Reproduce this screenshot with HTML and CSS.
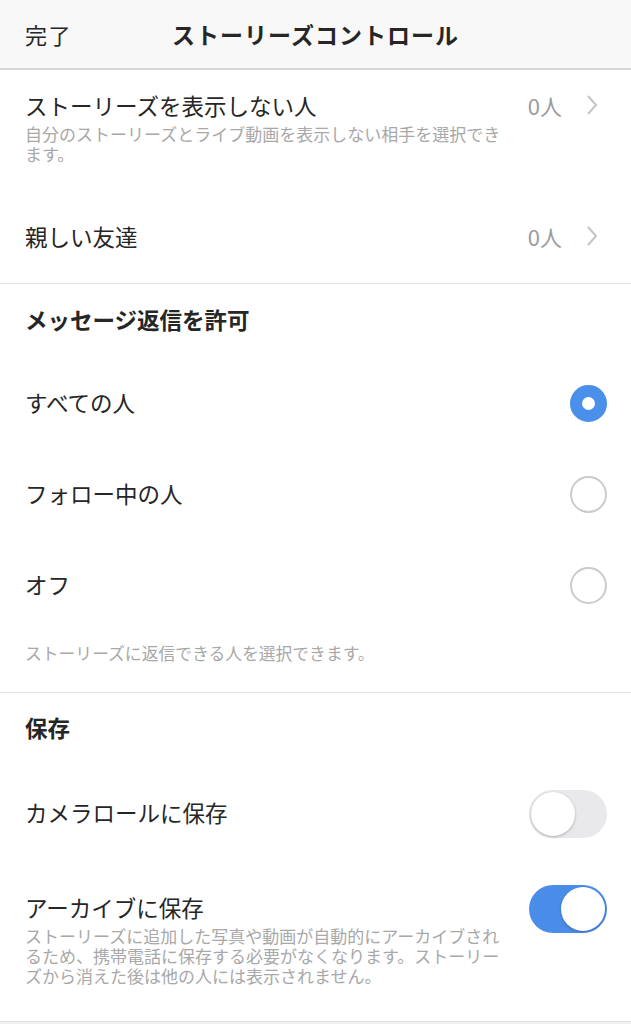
FILE: index.html
```html
<!DOCTYPE html>
<html lang="ja">
<head>
    <meta charset="utf-8">
    <title>ストーリーズコントロール</title>
    <link rel="stylesheet" href="styles.css">
</head>
<body>
    <div class="nav">
        <span class="nav-done">完了</span>
        <span class="nav-title">ストーリーズコントロール</span>
        <span></span>
    </div>

    <div class="page">
        <!-- who can see -->
        <section class="group">
            <div class="row row-detail">
                <div class="row-text">
                    <div class="row-label">ストーリーズを表示しない人</div>
                    <div class="row-note">自分のストーリーズとライブ動画を表示しない相手を選択できます。</div>
                </div>
                <div class="row-value">0人
                    <svg class="chevron" width="12" height="22" viewBox="0 0 12 22"><path d="M2 2 L10 11 L2 20" /></svg>
                </div>
            </div>
            <div class="row row-plain">
                <div class="row-label">親しい友達</div>
                <div class="row-value">0人
                    <svg class="chevron" width="12" height="22" viewBox="0 0 12 22"><path d="M2 2 L10 11 L2 20" /></svg>
                </div>
            </div>
        </section>

        <!-- replies -->
        <section class="group">
            <div class="group-title"><span>メッセージ返信を許可</span></div>
            <div class="row row-plain">
                <div class="row-label">すべての人</div>
                <span class="radio radio-on"></span>
            </div>
            <div class="row row-plain">
                <div class="row-label">フォロー中の人</div>
                <span class="radio"></span>
            </div>
            <div class="row row-plain">
                <div class="row-label">オフ</div>
                <span class="radio"></span>
            </div>
            <div class="group-note">ストーリーズに返信できる人を選択できます。</div>
        </section>

        <!-- saving -->
        <section class="group">
            <div class="group-title group-title-short"><span>保存</span></div>
            <div class="row row-plain row-tall">
                <div class="row-label">カメラロールに保存</div>
                <span class="toggle"></span>
            </div>
            <div class="row row-detail row-switch">
                <div class="row-text">
                    <div class="row-label">アーカイブに保存</div>
                    <div class="row-note">ストーリーズに追加した写真や動画が自動的にアーカイブされるため、携帯電話に保存する必要がなくなります。ストーリーズから消えた後は他の人には表示されません。</div>
                </div>
                <span class="toggle toggle-on"></span>
            </div>
        </section>
    </div>
</body>
</html>
```

FILE: styles.css
```css
body { margin: 0; background: #f0f0f0; font-family: "Noto Sans CJK JP", "Noto Sans", sans-serif; color: #262626; }

.nav { display: grid; grid-template-columns: 1fr auto 1fr; align-items: center; height: 68px; padding: 0 25px; background: #f8f8f8; border-bottom: 2px solid #d6d6d6; }
.nav-done { font-size: 22px; letter-spacing: 1.5px; }
.nav-title { font-size: 23px; font-weight: bold; letter-spacing: 1px; }

.page { background: #fff; }
.group { border-bottom: 1px solid #e2e2e2; }
.group-title { display: flex; align-items: center; height: 74px; padding: 0 25px; font-size: 22.5px; font-weight: bold; }
.group-title span { margin-bottom: 4px; }
.group-title-short { height: 72px; }
.group-note { padding: 12px 25px 29px; font-size: 16.8px; line-height: 20px; color: #a8a8a8; }

.row { display: flex; justify-content: space-between; padding: 0 24px 0 25px; }
.row-plain { align-items: center; height: 91px; }
.row-plain .row-label, .row-plain .row-value { margin-bottom: 4px; }
.row-tall { height: 98px; }
.row-detail { align-items: flex-start; padding-top: 20px; padding-bottom: 28px; }
.row-switch { padding-top: 22px; padding-bottom: 35px; }
.row-switch .row-label { margin-top: 7px; }

.row-label { font-size: 22.5px; line-height: 30px; }
.row-note { max-width: 485px; margin-top: 4px; font-size: 17px; line-height: 20px; color: #a8a8a8; }

.row-value { display: flex; align-items: center; gap: 24px; height: 30px; padding-right: 9px; font-size: 22px; color: #9c9c9c; }
.chevron { fill: none; stroke: #c4c4c4; stroke-width: 2; }

.radio { box-sizing: border-box; width: 37px; height: 37px; border: 2px solid #cbcbcb; border-radius: 50%; }
.radio-on { border: 12.5px solid #4a8fe9; background: #fff; }

.toggle { position: relative; box-sizing: border-box; width: 78px; height: 48px; border-radius: 24px; background: #e9e9eb; }
.toggle::after { content: ""; position: absolute; top: 2px; left: 2px; width: 44px; height: 44px; border-radius: 50%; background: #fff; box-shadow: 0 1px 3px rgba(0, 0, 0, .25); }
.toggle-on { background: #4a8de8; }
.toggle-on::after { left: 32px; }
```
